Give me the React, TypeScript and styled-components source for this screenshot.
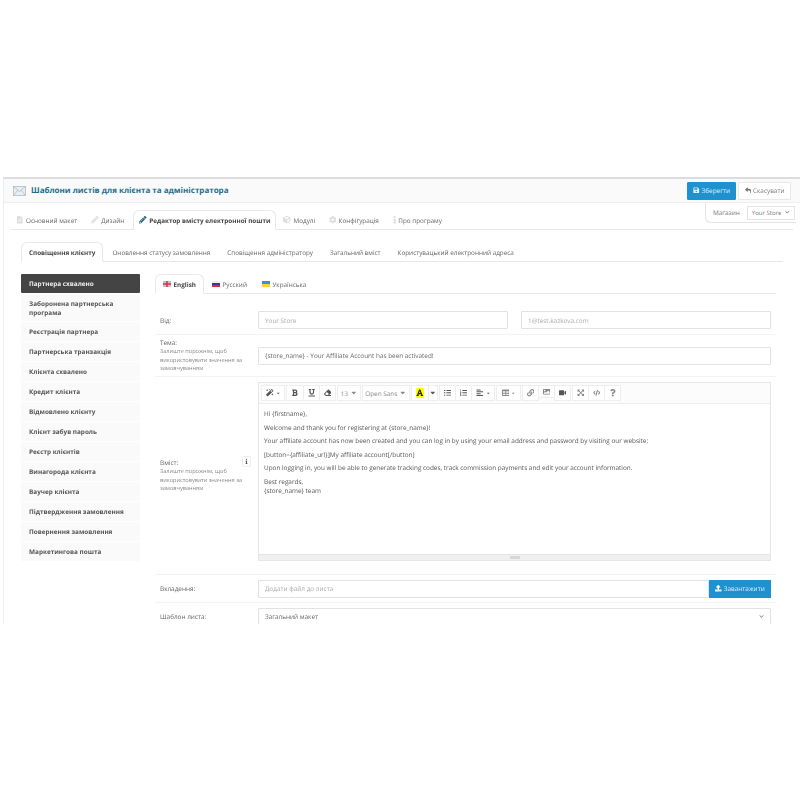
import React from "react"
import styled, { createGlobalStyle } from "styled-components"
import {
  FaSave, FaReply, FaPencilAlt, FaMagic, FaBold, FaUnderline, FaEraser, FaFont, FaListUl, FaListOl,
  FaAlignLeft, FaTable, FaLink, FaImage, FaVideo, FaExpandArrowsAlt, FaCode, FaQuestion, FaInfo, FaUpload,
  FaFileAlt, FaCube, FaCog, FaCaretDown, FaChevronDown,
} from "react-icons/fa"

const GlobalStyle = createGlobalStyle`
  html, body { margin: 0; padding: 0; background: #fff; }
  body {
    font-family: "Open Sans", "Liberation Sans", sans-serif;
    color: #555;
    text-rendering: geometricPrecision;
  }
  * { box-sizing: border-box; }
`

const Page = styled.div`
  padding-top: 177px;
  width: 800px;
  height: 800px;
  overflow: hidden;
`
const Frame = styled.div`
  height: 447px;
  margin-left: 3px;
  border-top: 2px solid #dcdcdc;
  border-left: 1px solid #eee;
  overflow: hidden;
  position: relative;
  /* the screenshot is a scaled down capture, everything in it is a bit soft */
  filter: blur(0.3px);
`
const Header = styled.header`
  height: 24px;
  background: #fafafa;
  border-bottom: 1px solid #eee;
  display: flex;
  align-items: center;
  padding: 0 9px 0 9px;
`
const Title = styled.h1`
  margin: 0 0 0 5px;
  font-size: 8px;
  font-weight: 700;
  color: #1f6f8b;
  flex: 1;
`
const HeaderButton = styled.button<{ $primary?: boolean; $w: number }>`
  width: ${(p) => p.$w}px;
  height: 18px;
  margin-left: 2px;
  padding: 0;
  display: flex;
  align-items: center;
  justify-content: center;
  gap: 2px;
  font: 6.4px "Open Sans", sans-serif;
  text-rendering: geometricPrecision;
  border-radius: 1px;
  border: 1px solid ${(p) => (p.$primary ? "#1e91cf" : "#e8e8e8")};
  background: ${(p) => (p.$primary ? "#1e91cf" : "#fff")};
  color: ${(p) => (p.$primary ? "#e6f4fb" : "#777")};
  svg { font-size: 6.5px; }
`
const StoreBox = styled.div`
  position: absolute;
  top: 24px;
  right: 4px;
  width: 91px;
  height: 20px;
  background: #fff;
  border: 1px solid #e4e4e4;
  border-top: 0;
  border-right: 0;
  border-bottom-left-radius: 6px;
  display: flex;
  align-items: center;
  padding-left: 7px;
  font-size: 6.4px;
  color: #777;
  gap: 7px;
`
const StoreSelect = styled.div`
  width: 48px;
  height: 14px;
  border: 1px solid #e4e4e4;
  display: flex;
  align-items: center;
  justify-content: space-between;
  padding: 0 4px;
  font-size: 6px;
  color: #777;
  svg { font-size: 4.5px; }
`
const Body = styled.div`
  padding: 7px 7px 0 7px;
`
const Tabs = styled.nav`
  display: flex;
  height: 20px;
  border-bottom: 1px solid #e8e8e8;
`
const Tab = styled.div<{ $active?: boolean; $pad: number; $tight?: boolean }>`
  display: flex;
  align-items: center;
  gap: ${(p) => (p.$tight ? 0 : 2.5)}px;
  padding: 0 ${(p) => p.$pad}px;
  margin-right: 1px;
  height: 20px;
  font-size: 6.35px;
  font-weight: ${(p) => (p.$active ? 700 : 400)};
  color: ${(p) => (p.$active ? "#444" : "#666")};
  background: ${(p) => (p.$active ? "#fff" : "transparent")};
  white-space: nowrap;
  border: 1px solid ${(p) => (p.$active ? "#e8e8e8" : "transparent")};
  border-bottom-color: ${(p) => (p.$active ? "#fff" : "transparent")};
  border-radius: 6px 6px 0 0;
  svg { font-size: 7.5px; color: ${(p) => (p.$active ? "#2a5f7d" : "#ddd")}; }
`
const Inner = styled.div`
  padding: 12px 10px 0 10px;
`
const Columns = styled.div`
  display: flex;
  margin-top: 12px;
  padding-right: 7px;
`
const Sidebar = styled.aside`
  width: 119px;
  margin-right: 15px;
  display: flex;
  flex-direction: column;
  gap: 1px;
`
const SideItem = styled.div<{ $active?: boolean; $tall?: boolean }>`
  height: ${(p) => (p.$tall ? 27 : 19)}px;
  padding: 0 8px;
  display: flex;
  align-items: center;
  font-size: 6.4px;
  line-height: 9px;
  font-weight: 700;
  border-radius: 1px;
  background: ${(p) => (p.$active ? "#444" : "#fafafa")};
  color: ${(p) => (p.$active ? "#eee" : "#555")};
`
const Main = styled.section`
  flex: 1;
  min-width: 0;
`
const Row = styled.div<{ $h: number; $top?: number }>`
  height: ${(p) => p.$h}px;
  display: flex;
  align-items: center;
  border-bottom: 1px solid #f3f3f3;
  padding: ${(p) => p.$top ?? 0}px 5px 0 0;
`
const Label = styled.div`
  width: 103px;
  flex: none;
  padding: 0 8px 0 5px;
  font-size: 6.4px;
  line-height: 9px;
  color: #666;
  position: relative;
`
const Help = styled.div`
  font-size: 5.6px;
  line-height: 8.5px;
  color: #888;
`
const InfoBadge = styled.span`
  position: absolute;
  right: 7px;
  top: -2px;
  width: 9px;
  height: 11px;
  border: 1px solid #eee;
  border-radius: 1px;
  display: flex;
  align-items: center;
  justify-content: center;
  color: #555;
  svg { font-size: 5px; }
`
const Field = styled.div<{ $muted?: boolean; $gap?: boolean }>`
  flex: 1;
  height: 18px;
  border: 1px solid #e2e2e2;
  border-radius: 1px;
  display: flex;
  align-items: center;
  justify-content: space-between;
  padding: 0 6px;
  font-size: 6.4px;
  color: ${(p) => (p.$muted ? "#aaa" : "#666")};
  margin-right: ${(p) => (p.$gap ? 13 : 0)}px;
  svg { font-size: 5px; color: #888; }
`
const UploadButton = styled.button`
  width: 62px;
  height: 18px;
  padding: 0;
  flex: none;
  border: 0;
  background: #1e91cf;
  color: #dff0fa;
  font: 6.4px "Open Sans", sans-serif;
  text-rendering: geometricPrecision;
  display: flex;
  align-items: center;
  justify-content: center;
  gap: 2px;
  svg { font-size: 6.5px; color: #fff; }
`
const Editor = styled.div`
  flex: 1;
  height: 179px;
  margin-bottom: 8px;
  border: 1px solid #e6e6e6;
  display: flex;
  flex-direction: column;
`
const Toolbar = styled.div`
  height: 21px;
  flex: none;
  background: #fcfcfc;
  border-bottom: 1px solid #eee;
  display: flex;
  align-items: flex-start;
  padding: 2px 0 0 3px;
`
const ToolGroup = styled.div`
  display: flex;
  margin-right: 2px;
`
const ToolBtn = styled.div<{ $w: number; $dark?: boolean; $short?: boolean }>`
  width: ${(p) => p.$w}px;
  height: ${(p) => (p.$short ? 13 : 16)}px;
  border: 1px solid #eee;
  margin-left: -1px;
  background: #fff;
  display: flex;
  align-items: center;
  justify-content: center;
  gap: 2px;
  font-size: 6.4px;
  color: ${(p) => (p.$dark ? "#555" : "#888")};
  svg { font-size: 7.5px; }
  svg + svg { font-size: 4.5px; }
`
const Highlight = styled.span`
  width: 8px;
  height: 10px;
  background: #ff0;
  color: #222;
  display: flex;
  align-items: center;
  justify-content: center;
  svg { font-size: 7.5px; }
`
const Content = styled.div`
  flex: 1;
  padding: 5px 5px 0 5px;
  font-size: 6.4px;
  line-height: 9px;
  color: #555;
  p { margin: 0 0 4.5px; }
`
const Resizer = styled.div`
  height: 6px;
  flex: none;
  background: #f0f0f0;
  border-top: 1px solid #e4e4e4;
  display: flex;
  align-items: center;
  justify-content: center;
  &::after { content: ""; width: 10px; height: 3px; background: #d8d8d8; }
`

const Envelope = () => (
  <svg width="13" height="10" viewBox="0 0 13 10" fill="#e9eef1" stroke="#a9b4ba" strokeWidth="0.7">
    <rect x="0.5" y="0.5" width="12" height="9" />
    <path d="M0.5 0.5 L6.5 5.5 L12.5 0.5 M0.5 9.5 L4.8 4.2 M12.5 9.5 L8.2 4.2" fill="none" />
  </svg>
)

const Flag = ({ colors }: { colors: string[] }) => (
  <svg width="8" height="6" viewBox="0 0 8 6" style={{ flex: "none" }}>
    {colors.map((c, i) => (
      <rect key={i} x="0" y={(i * 6) / colors.length} width="8" height={6 / colors.length} fill={c} />
    ))}
  </svg>
)

const UkFlag = () => (
  <svg width="8" height="6" viewBox="0 0 8 6" style={{ flex: "none" }}>
    <rect width="8" height="6" fill="#c9bfc6" />
    <path d="M0 3 H8 M4 0 V6" stroke="#d8344a" strokeWidth="1.6" />
  </svg>
)

const sideItems = [
  "Заборонена партнерська програма",
  "Реєстрація партнера",
  "Партнерська транзакція",
  "Клієнта схвалено",
  "Кредит клієнта",
  "Відмовлено клієнту",
  "Клієнт забув пароль",
  "Реєстр клієнтів",
  "Винагорода клієнта",
  "Ваучер клієнта",
  "Підтвердження замовлення",
  "Повернення замовлення",
  "Маркетингова пошта",
]

const helpText = "Залиште порожнім, щоб використовувати значення за замовчуванням"

export default function App() {
  return (
    <Page>
      <GlobalStyle />
      <Frame>
        <Header>
          <Envelope />
          <Title>Шаблони листів для клієнта та адміністратора</Title>
          <HeaderButton $primary $w={49}><FaSave />Зберегти</HeaderButton>
          <HeaderButton $w={53}><FaReply />Скасувати</HeaderButton>
        </Header>
        <StoreBox>
          Магазин
          <StoreSelect>Your Store<FaChevronDown /></StoreSelect>
        </StoreBox>
        <Body>
          <Tabs>
            <Tab $pad={4}><FaFileAlt />Основний макет</Tab>
            <Tab $pad={7}><FaPencilAlt />Дизайн</Tab>
            <Tab $active $pad={5}><FaPencilAlt />Редактор вмісту електронної пошти</Tab>
            <Tab $pad={5}><FaCube />Модулі</Tab>
            <Tab $pad={5.5}><FaCog />Конфігурація</Tab>
            <Tab $pad={3.5} $tight><FaInfo />Про програму</Tab>
          </Tabs>
          <Inner>
            <Tabs>
              <Tab $active $pad={7}>Сповіщення клієнту</Tab>
              <Tab $pad={7}>Оновлення статусу замовлення</Tab>
              <Tab $pad={7}>Сповіщення адміністратору</Tab>
              <Tab $pad={7}>Загальний вміст</Tab>
              <Tab $pad={7}>Користувацький електронний адреса</Tab>
            </Tabs>
            <Columns>
              <Sidebar>
                <SideItem $active>Партнера схвалено</SideItem>
                {sideItems.map((s, i) => (
                  <SideItem key={s} $tall={i === 0}>{s}</SideItem>
                ))}
              </Sidebar>
              <Main>
                <Tabs>
                  <Tab $active $pad={7}><UkFlag />English</Tab>
                  <Tab $pad={6}><Flag colors={["#eee", "#2a3f9a", "#d8283a"]} />Русский</Tab>
                  <Tab $pad={6}><Flag colors={["#3d8fe0", "#f5d63d"]} />Українська</Tab>
                </Tabs>
                <Row $h={41} $top={12}>
                  <Label>Від:</Label>
                  <Field $muted $gap>Your Store</Field>
                  <Field $muted>1@test.kazkova.com</Field>
                </Row>
                <Row $h={42}>
                  <Label>Тема:<Help>{helpText}</Help></Label>
                  <Field>{"{store_name} - Your Affiliate Account has been activated!"}</Field>
                </Row>
                <Row $h={198}>
                  <Label>
                    Вміст:
                    <InfoBadge><FaInfo /></InfoBadge>
                    <Help>{helpText}</Help>
                  </Label>
                  <Editor>
                    <Toolbar>
                      <ToolGroup><ToolBtn $w={24} $dark><FaMagic /><FaCaretDown /></ToolBtn></ToolGroup>
                      <ToolGroup>
                        <ToolBtn $w={18} $dark><FaBold /></ToolBtn>
                        <ToolBtn $w={17} $dark><FaUnderline /></ToolBtn>
                        <ToolBtn $w={17} $dark><FaEraser /></ToolBtn>
                      </ToolGroup>
                      <ToolGroup><ToolBtn $w={24}>13<FaCaretDown /></ToolBtn></ToolGroup>
                      <ToolGroup><ToolBtn $w={48}>Open Sans<FaCaretDown /></ToolBtn></ToolGroup>
                      <ToolGroup>
                        <ToolBtn $w={18}><Highlight><FaFont /></Highlight></ToolBtn>
                        <ToolBtn $w={10} $dark><FaCaretDown /></ToolBtn>
                      </ToolGroup>
                      <ToolGroup>
                        <ToolBtn $w={17} $dark><FaListUl /></ToolBtn>
                        <ToolBtn $w={17} $dark><FaListOl /></ToolBtn>
                        <ToolBtn $w={24} $dark><FaAlignLeft /><FaCaretDown /></ToolBtn>
                      </ToolGroup>
                      <ToolGroup><ToolBtn $w={25}><FaTable /><FaCaretDown /></ToolBtn></ToolGroup>
                      <ToolGroup>
                        <ToolBtn $w={17}><FaLink /></ToolBtn>
                        <ToolBtn $w={17} $short><FaImage /></ToolBtn>
                        <ToolBtn $w={17} $dark><FaVideo /></ToolBtn>
                      </ToolGroup>
                      <ToolGroup>
                        <ToolBtn $w={17}><FaExpandArrowsAlt /></ToolBtn>
                        <ToolBtn $w={17}><FaCode /></ToolBtn>
                        <ToolBtn $w={17}><FaQuestion /></ToolBtn>
                      </ToolGroup>
                    </Toolbar>
                    <Content>
                      <p>{"Hi {firstname},"}</p>
                      <p>{"Welcome and thank you for registering at {store_name}!"}</p>
                      <p>Your affiliate account has now been created and you can log in by using your email address and password by visiting our website:</p>
                      <p>{"[button={affiliate_url}]My affiliate account[/button]"}</p>
                      <p>Upon logging in, you will be able to generate tracking codes, track commission payments and edit your account information.</p>
                      <p>Best regards,<br />{"{store_name} team"}</p>
                    </Content>
                    <Resizer />
                  </Editor>
                </Row>
                <Row $h={28}>
                  <Label>Вкладення:</Label>
                  <Field $muted>Додати файл до листа</Field>
                  <UploadButton><FaUpload />Завантажити</UploadButton>
                </Row>
                <Row $h={28}>
                  <Label>Шаблон листа:</Label>
                  <Field>Загальний макет<FaChevronDown /></Field>
                </Row>
              </Main>
            </Columns>
          </Inner>
        </Body>
      </Frame>
    </Page>
  )
}
